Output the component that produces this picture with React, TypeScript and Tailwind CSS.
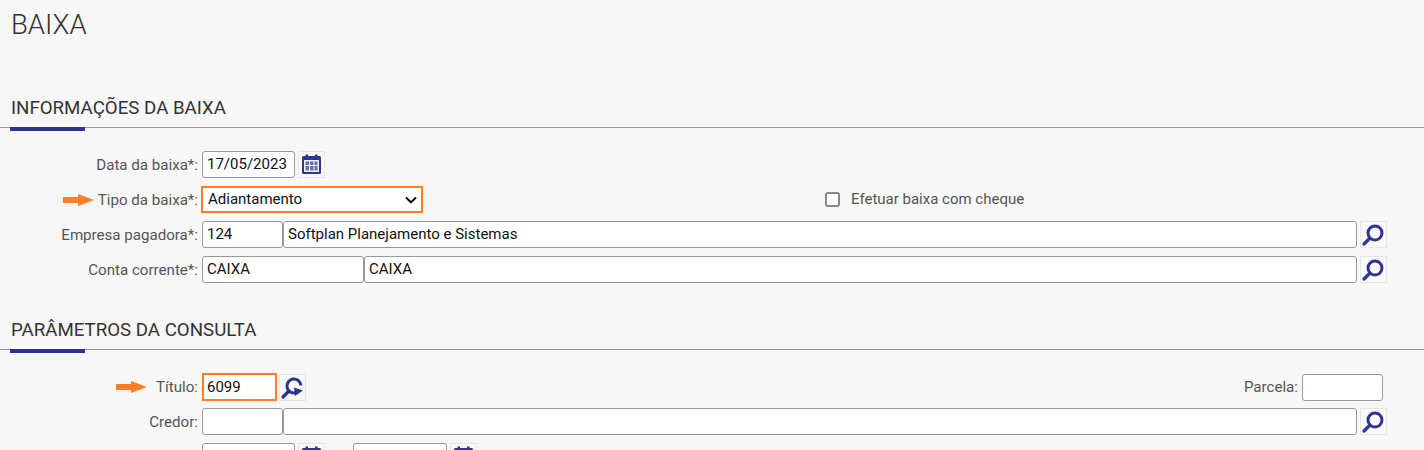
import { ReactNode } from "react";

const inputClass =
  "h-[27px] rounded-[3px] border border-[#999] bg-white px-[4px] pb-[1px] text-[15px] text-[#111] outline-none font-['Roboto',sans-serif]";

function Arrow({ className }: { className: string }) {
  return (
    <svg width="31" height="12" viewBox="0 0 31 12" className={className}>
      <path d="M0 3H15V0L31 6L15 12V9H0Z" fill="#fd7e26" />
    </svg>
  );
}

function Row({ label, arrow, children, className }: { label: string; arrow?: string; children: ReactNode; className: string }) {
  return (
    <div className={`flex items-center ${className}`}>
      <div className="flex w-[198px] shrink-0 items-center justify-end pt-[1px] text-[15.1px] text-[#555]">
        {arrow && <Arrow className={arrow} />}
        <span>{label}</span>
      </div>
      <div className="ml-[4px] flex min-w-0 flex-1 items-center">{children}</div>
    </div>
  );
}

function IconBox({ children, className }: { children: ReactNode; className: string }) {
  return (
    <button className={`flex h-[27px] w-[27px] shrink-0 items-center justify-center border border-[#e6e6e6] bg-[#f9f9f9] ${className}`}>
      {children}
    </button>
  );
}

function Calendar() {
  return (
    <IconBox className="ml-[3px]">
      <svg width="25" height="25" viewBox="0 0 25 25">
        <rect x="3" y="4" width="19" height="18" rx="1.500" fill="#2e3590" />
        <rect x="6.500" y="2.500" width="2.500" height="3" fill="#2e3590" />
        <rect x="16" y="2.500" width="2.500" height="3" fill="#2e3590" />
        <rect x="5" y="8" width="15" height="12" fill="#eeeef8" />
        <path d="M6.500 9.500h3.500v3.500h-3.500zM11 9.500h3.500v3.500H11zM15.500 9.500h3v3.500h-3zM6.500 14h3.500v4.500h-3.500zM11 14h3.500v4.500H11zM15.500 14h3v4.500h-3z" fill="#6a70b5" />
      </svg>
    </IconBox>
  );
}

function Search({ className = "ml-[3px]" }: { className?: string }) {
  return (
    <IconBox className={className}>
      <svg width="25" height="25" viewBox="0 0 25 25" fill="none">
        <circle cx="14" cy="11" r="7" stroke="#2e3590" strokeWidth="3" />
        <path d="M8.500 16.500L3 22" stroke="#2e3590" strokeWidth="3.200" strokeLinecap="round" />
      </svg>
    </IconBox>
  );
}

function SearchRefresh() {
  return (
    <IconBox className="ml-[2px]">
      <svg width="25" height="25" viewBox="0 0 25 25" fill="none">
        <path d="M16 17.700A7 7 0 1 1 20.900 10.500" stroke="#2e3590" strokeWidth="3" />
        <path d="M8.500 16.500L3 22" stroke="#2e3590" strokeWidth="3.200" strokeLinecap="round" />
        <path d="M14 12.500L23 15.500L15 21Z" fill="#2e3590" />
      </svg>
    </IconBox>
  );
}

function Section({ title, className }: { title: string; className: string }) {
  return (
    <div className={className}>
      <h2 className="pl-[11px] text-[18.7px] leading-[24px] text-[#333]">{title}</h2>
      <div className="mt-[7px] h-px bg-[#999]" />
      <div className="ml-[10px] -mt-px h-[4px] w-[75px] bg-[#2e3590]" />
    </div>
  );
}

export default function App() {
  return (
    <div className="h-[450px] overflow-hidden bg-[#f7f7f7] font-['Roboto',sans-serif]">
      <h1 className="pl-[11px] pt-[8px] text-[27.5px] font-light leading-[34px] text-[#333]">BAIXA</h1>

      <Section title="INFORMAÇÕES DA BAIXA" className="mt-[54px]" />

      <Row label="Data da baixa*:" className="mt-[20px]">
        <input className={`${inputClass} w-[93px]`} defaultValue="17/05/2023" readOnly />
        <Calendar />
      </Row>

      <Row label="Tipo da baixa*:" arrow="mr-[4px]" className="mt-[8px]">
        <div className="relative -ml-[1px] h-[27px] w-[222px] border-2 border-[#fd7e26] bg-white pl-[5px] text-[15px] leading-[22px] text-[#111]">
          Adiantamento
          <svg width="12" height="8" viewBox="0 0 12 8" fill="none" className="absolute right-[4px] top-[8px]">
            <path d="M1 1.500L6 6.300L11 1.500" stroke="#111" strokeWidth="2" />
          </svg>
        </div>
        <input type="checkbox" className="ml-[402px] h-[15px] w-[15px] appearance-none rounded-[3px] border-2 border-[#888] bg-white" readOnly />
        <span className="ml-[11px] text-[15px] text-[#555]">Efetuar baixa com cheque</span>
      </Row>

      <Row label="Empresa pagadora*:" className="mt-[8px]">
        <input className={`${inputClass} w-[81px]`} defaultValue="124" readOnly />
        <input className={`${inputClass} min-w-0 flex-1`} defaultValue="Softplan Planejamento e Sistemas" readOnly />
        <Search className="ml-[3px] mr-[37px]" />
      </Row>

      <Row label="Conta corrente*:" className="mt-[8px]">
        <input className={`${inputClass} w-[162px]`} defaultValue="CAIXA" readOnly />
        <input className={`${inputClass} min-w-0 flex-1`} defaultValue="CAIXA" readOnly />
        <Search className="ml-[3px] mr-[37px]" />
      </Row>

      <Section title="PARÂMETROS DA CONSULTA" className="mt-[35px]" />

      <Row label="Título:" arrow="mr-[9px]" className="mt-[20px]">
        <input className="h-[28px] w-[75px] border-2 border-[#fd7e26] bg-white px-[3px] pb-[1px] text-[15px] text-[#111] outline-none" defaultValue="6099" readOnly />
        <SearchRefresh />
        <span className="ml-auto pt-[1px] text-[15.1px] text-[#555]">Parcela:</span>
        <input className={`${inputClass} ml-[4px] mr-[41px] w-[81px]`} readOnly />
      </Row>

      <Row label="Credor:" className="mt-[7px]">
        <input className={`${inputClass} w-[81px]`} readOnly />
        <input className={`${inputClass} min-w-0 flex-1`} readOnly />
        <Search className="ml-[3px] mr-[37px]" />
      </Row>

      <Row label="" className="mt-[8px]">
        <input className={`${inputClass} w-[93px]`} readOnly />
        <Calendar />
        <input className={`${inputClass} ml-[28px] w-[94px]`} readOnly />
        <Calendar />
      </Row>
    </div>
  );
}
